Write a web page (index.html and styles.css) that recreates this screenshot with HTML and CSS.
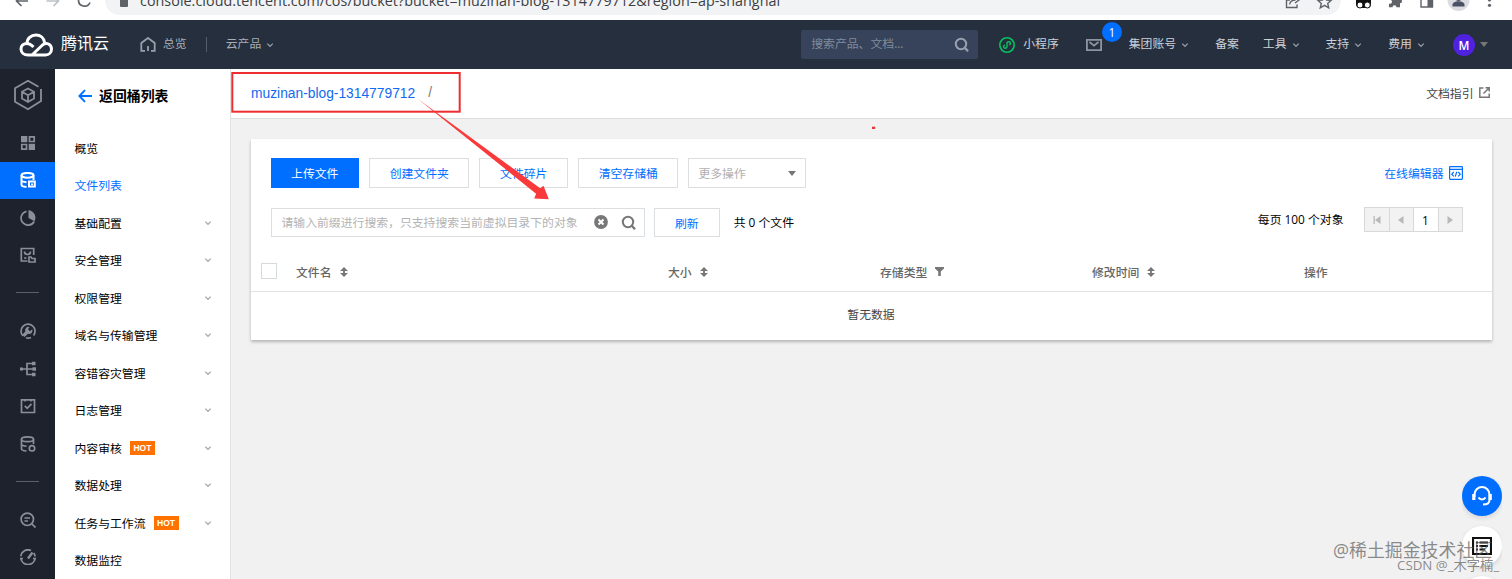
FILE: index.html
```html
<!DOCTYPE html>
<html lang="zh-CN">
<head>
  <meta charset="UTF-8" />
  <title>文件列表 - 对象存储 - 腾讯云</title>
  <link rel="stylesheet" href="styles.css">
</head>
<body>
  <!-- shared icons -->
  <svg class="defs">
    <symbol id="chevron" viewBox="0 0 8 8"><path d="M1.200 2.600 4 5.300 6.800 2.600" fill="none" stroke="currentColor" stroke-width="1.300"/></symbol>
    <symbol id="search" viewBox="0 0 16 16"><circle cx="7" cy="7" r="5.200" fill="none" stroke="currentColor" stroke-width="2"/><path d="M10.800 10.800 14 14.200" stroke="currentColor" stroke-width="2.400"/></symbol>
    <symbol id="sort" viewBox="0 0 8 10"><path d="M4 0 8 4H0zM4 10 0 6h8z" fill="currentColor"/><path d="M4 2v6" stroke="currentColor" stroke-width="1.800"/></symbol>
  </svg>

  <div class="browser">
    <svg class="nav-icons" width="96" height="20" viewBox="0 0 96 20" fill="none" stroke-width="1.700">
      <path d="M16.500 1H28M21.500-4.500 16.500 1l5 5" stroke="#5f6368"/>
      <path d="M46.500 1H58M53.500-4.500 58.500 1l-5 5" stroke="#bdc1c6"/>
      <path d="M78.500 0a6 6 0 0 0 11.500 2.500" stroke="#5f6368"/>
    </svg>
    <div class="url-bar">
      <span class="lock"></span>
      <span class="url">console.cloud.tencent.com/cos/bucket?bucket=muzinan-blog-1314779712&amp;region=ap-shanghai</span>
    </div>
    <svg class="ext-icons" width="232" height="20" viewBox="1280 0 232 20" fill="none" stroke="#5f6368" stroke-width="1.400">
      <path d="M1290 0h-3.500v7.500H1297V4.500M1289.500 4.500c.5-3 2.500-4.500 6-4.500M1295-3l4 3-4 3"/>
      <path d="m1324.500-4 2 4 4.500.4-3.300 3 1 4.400-4.200-2.500-4.200 2.500 1-4.400-3.300-3 4.500-.4z"/>
      <rect x="1356" y="-5" width="15" height="13" rx="4" fill="#111" stroke="none"/>
      <circle cx="1360" cy="5" r="3" fill="#fff" stroke="#111" stroke-width="1"/>
      <circle cx="1367.300" cy="5" r="3" fill="#fff" stroke="#111" stroke-width="1"/>
      <path d="M1389-4h11v3.200a2 2 0 1 1 0 4v4h-3.500a2 2 0 1 0-4 0H1389v-3.700a2 2 0 1 0 0-3.500z" fill="#5f6368" stroke="none"/>
      <path d="M1421-4h11.500V7H1421z"/><path d="M1427.500-4h5V7h-5z" fill="#5f6368" stroke="none"/>
      <circle cx="1458.500" cy="0" r="11" fill="#dadce0" stroke="none"/>
      <circle cx="1458.500" cy="-2" r="3" fill="#4b5164" stroke="none"/>
      <path d="M1452.500 6.500V5c0-5 12-5 12 0v1.500z" fill="#4b5164" stroke="none"/>
      <circle cx="1489.500" cy="0" r="1.600" fill="#5f6368" stroke="none"/><circle cx="1489.500" cy="5.300" r="1.600" fill="#5f6368" stroke="none"/>
    </svg>
  </div>

  <header class="topbar">
    <svg class="logo" width="34" height="24" viewBox="0 0 34 24" fill="none" stroke="#fff" stroke-width="3">
      <path d="M13 22 23.500 12c4-3.500 9-.5 9 4 0 3.500-2.500 6-6 6H9c-4 0-7-2.500-7-6s2.500-5.500 6-5.500c2.500 0 4 1 6.500 3.500M8 10.500C8 5.500 12 2 17 2c4.500 0 8 3 8.500 7.500" stroke-linejoin="round"/>
    </svg>
    <span class="brand">腾讯云</span>
    <svg class="home" width="16" height="15" viewBox="0 0 16 15" fill="none" stroke="#98a0ab" stroke-width="1.800"><path d="M5 13.800H1.300V6L8 1l6.700 5v7.800H11M8 9v5"/></svg>
    <span>总览</span>
    <i class="split"></i>
    <span>云产品</span><svg class="chev"><use href="#chevron"/></svg>

    <div class="top-search"><span>搜索产品、文档...</span><svg width="16" height="16"><use href="#search"/></svg></div>
    <svg class="mini" width="16" height="16" viewBox="0 0 16 16" fill="none" stroke="#07c160"><circle cx="8" cy="8" r="7.200" stroke-width="1.600"/><path d="M6 8.300c-2 .3-2 2.900 0 2.900 1.200 0 2-.7 2-1.700V6.500c0-1 .8-1.700 2-1.700 2 0 2 2.600 0 2.900" stroke-width="1.400"/></svg>
    <span class="light">小程序</span>
    <div class="mail">
      <svg width="16" height="12" viewBox="0 0 16 12" fill="none" stroke="#8d95a1" stroke-width="1.800"><path d="M.9.900h14.200v10.200H.9z"/><path d="m3.500 3 4.500 3.700L12.500 3"/></svg>
      <b class="count">1</b>
    </div>
    <span class="light account">集团账号</span><svg class="chev"><use href="#chevron"/></svg>
    <span class="light beian">备案</span>
    <span class="light tools">工具</span><svg class="chev"><use href="#chevron"/></svg>
    <span class="light menu">支持</span><svg class="chev"><use href="#chevron"/></svg>
    <span class="light menu">费用</span><svg class="chev"><use href="#chevron"/></svg>
    <b class="avatar">M</b>
    <i class="caret"></i>
  </header>

  <div class="layout">
    <nav class="rail">
      <div class="rail-logo">
        <svg width="30" height="32" viewBox="0 0 30 32" fill="none" stroke="#8a8f99" stroke-width="1.800"><path d="M28 10v12L15 30.300 2 22.800V9.200L15 1.700l10.500 6"/><path d="m15 9.500 6 3.300v6.700l-6 3.500-6-3.500v-6.700zM9 12.800l6 3.400 6-3.400M15 16.200V23"/></svg>
      </div>
      <a><svg viewBox="0 0 16 16"><path class="fill" d="M1 1h6.300v6.300H1zM8.700 8.700H15V15H8.700z"/><path d="M9.500 1.800h4.700v4.700H9.500zM1.800 9.500h4.700v4.700H1.800z"/></svg></a>
      <a class="active"><svg viewBox="0 0 16 16"><ellipse cx="7.500" cy="3.300" rx="6" ry="2.400"/><path d="M1.500 3.300v9.500c0 1.200 2 2 5 2.200M13.500 3.300V8M1.500 8c0 1.200 2 2 5 2.200"/><path d="M9 9.500h5.800v5H9zM12 11.500v1.500"/></svg></a>
      <a><svg viewBox="0 0 16 16"><path d="M6.500 1.300a7 7 0 1 0 7.700 10.200"/><path class="fill" d="M8.500.3a7.400 7.400 0 0 1 6 11L8.500 8z"/></svg></a>
      <a><svg viewBox="0 0 16 16"><path d="M7.500 14H1.300V1.500h12.400V8M4.500 4.500c0 4 6 4 6 0M4 11h2.500"/><path d="M9 10h2l1 1.500h3V15H9z"/></svg></a>
      <hr>
      <a><svg viewBox="0 0 16 16"><path d="M3 13A7 7 0 1 1 13.500 12.500M6 14.700c1.500.5 3.500.4 5-.3"/><path class="fill" d="M9.500 4a3.400 3.400 0 0 0-4.200 4.500l-3 3.300 2.200 2.200L8 10.800a3.400 3.400 0 0 0 4.200-4.500L10 8.300 8 6.200z"/></svg></a>
      <a><svg viewBox="0 0 16 16"><path d="M3 8h11M12 2.500H7v11h5"/><path class="fill" d="M0 6.500h3v3H0zM12 .8h3.500v3.500H12zM12.500 6.300H16v3.500h-3.500zM12 11.800h3.500v3.500H12z"/></svg></a>
      <a><svg viewBox="0 0 16 16"><path d="M1.500 1.800h13v12.700h-13zM4.800 7.800l2.400 2.500 4.300-4.500M5 1.800v1.700M11 1.800v1.700"/></svg></a>
      <a><svg viewBox="0 0 16 16"><ellipse cx="7.500" cy="3.300" rx="6" ry="2.400"/><path d="M1.500 3.300v9.500c0 1.200 2 2 5 2.200M13.500 3.300V8M1.500 8c0 1.200 2 2 5 2.200"/><circle cx="12" cy="12.300" r="2.700"/></svg></a>
      <hr>
      <a><svg viewBox="0 0 16 16"><circle cx="7.300" cy="7.300" r="6.200"/><path d="m11.500 11.500 4 4M4.500 6H10M4.500 9H8"/></svg></a>
      <a><svg viewBox="0 0 16 16"><path d="M.9 7.300A7.100 7.100 0 0 1 11 1.500M13.800 4A7 7 0 0 1 15 7.500M.9 9.500a7.200 7.200 0 0 0 14.200 0M0 9.500h3M13 9.500h3"/><path d="M12.500 3.500 8 9.500" stroke-width="2.400"/></svg></a>
    </nav>

    <aside class="sidebar">
      <h2><svg width="15" height="14" viewBox="0 0 15 14" fill="none" stroke="#006eff" stroke-width="1.900"><path d="M1.500 7H14M7 1.200 1.400 7 7 12.800"/></svg>返回桶列表</h2>
      <ul>
        <li>概览</li>
        <li class="current">文件列表</li>
        <li>基础配置<svg class="chev"><use href="#chevron"/></svg></li>
        <li>安全管理<svg class="chev"><use href="#chevron"/></svg></li>
        <li>权限管理<svg class="chev"><use href="#chevron"/></svg></li>
        <li>域名与传输管理<svg class="chev"><use href="#chevron"/></svg></li>
        <li>容错容灾管理<svg class="chev"><use href="#chevron"/></svg></li>
        <li>日志管理<svg class="chev"><use href="#chevron"/></svg></li>
        <li>内容审核<em>HOT</em><svg class="chev"><use href="#chevron"/></svg></li>
        <li>数据处理<svg class="chev"><use href="#chevron"/></svg></li>
        <li>任务与工作流<em>HOT</em><svg class="chev"><use href="#chevron"/></svg></li>
        <li>数据监控</li>
      </ul>
    </aside>

    <main>
      <div class="crumb">
        <a>muzinan-blog-1314779712</a><span class="slash">/</span>
        <span class="guide">文档指引<svg width="11" height="11" viewBox="0 0 11 11" fill="none" stroke="#777" stroke-width="1.500"><path d="M4.500 1H.8v9.200h9.400V6.500M6.500.8h3.700v3.700M10 1 4.500 6.500"/></svg></span>
      </div>

      <section class="card">
        <div class="row actions">
          <button class="primary">上传文件</button>
          <button>创建文件夹</button>
          <button>文件碎片</button>
          <button>清空存储桶</button>
          <div class="select">更多操作<i class="caret"></i></div>
          <a class="editor">在线编辑器<svg width="14" height="14" viewBox="0 0 14 14" fill="none" stroke="#006eff" stroke-width="1.200"><rect x=".6" y=".6" width="12.800" height="12.800" rx=".8"/><path d="M.6 3.300h12.800M4.800 6 2.800 8.200l2 2.200M9.200 6l2 2.200-2 2.200M7.800 5.800l-1.600 4.800"/></svg></a>
        </div>

        <div class="row filter">
          <div class="search">
            <span>请输入前缀进行搜索，只支持搜索当前虚拟目录下的对象</span>
            <svg class="clear" width="14" height="14" viewBox="0 0 14 14"><circle cx="7" cy="7" r="6.900" fill="#777"/><path d="m4.500 4.500 5 5m0-5-5 5" stroke="#fff" stroke-width="2"/></svg>
            <svg width="16" height="16"><use href="#search"/></svg>
          </div>
          <button>刷新</button>
          <span class="total">共 0 个文件</span>
          <span class="per-page">每页 100 个对象</span>
          <div class="pager">
            <span><svg width="8" height="8" viewBox="0 0 8 8"><path d="M.5 0h1.300v8H.5zM7.500 0v8L2 4z"/></svg></span>
            <span><svg width="6" height="8" viewBox="0 0 6 8"><path d="M5.500 0v8L0 4z"/></svg></span>
            <span class="page">1</span>
            <span><svg width="6" height="8" viewBox="0 0 6 8"><path d="M.5 0v8L6 4z"/></svg></span>
          </div>
        </div>

        <div class="thead">
          <i class="checkbox"></i>
          <span>文件名<svg width="8" height="10"><use href="#sort"/></svg></span>
          <span>大小<svg width="8" height="10"><use href="#sort"/></svg></span>
          <span>存储类型<svg width="9" height="9" viewBox="0 0 9 9"><path d="M0 0h9v1.500L5.800 4.500V9H3.200V4.500L0 1.500z" fill="#777"/></svg></span>
          <span>修改时间<svg width="8" height="10"><use href="#sort"/></svg></span>
          <span>操作</span>
        </div>
        <div class="empty">暂无数据</div>
      </section>
    </main>
  </div>

  <div class="floats">
    <div class="float service">
      <svg width="22" height="22" viewBox="0 0 22 22" fill="none" stroke="#fff" stroke-width="2"><path d="M3.500 12V9.500a7.500 7.500 0 0 1 15 0V15c0 3-2 4.500-6.500 4.500M7.500 12.500c1.500 2.500 5.500 2.500 7 0"/><path d="M2.800 9v6M19.200 9v6" stroke-width="3.200"/></svg>
    </div>
    <div class="float">
      <svg width="20" height="18" viewBox="0 0 20 18" fill="none" stroke="#111" stroke-width="2.200"><path d="M1 1h18v16H1z"/><path d="M4 5.500h2M7.500 5.500H16M4 9h2M7.500 9H16M4 12.500h2M7.500 12.500H13" stroke-width="1.800"/></svg>
    </div>
    <div class="float"></div>
  </div>
  <div class="mark mark-main">@稀土掘金技术社区</div>
  <div class="mark mark-sub">CSDN @_木字楠_</div>

  <!-- red box and arrow drawn over the page -->
  <svg class="annotation" width="1512" height="579" viewBox="0 0 1512 579">
    <rect x="232.300" y="73" width="227.400" height="38.700" fill="none" stroke="#ee2d30" stroke-width="2"/>
    <path d="M418 99 540.200 188.300l3.300-2.600 5.300 13.600-14.600-.8 1.900-4.800z" fill="#fa3a3a"/>
    <rect x="872" y="126.700" width="3.200" height="2.300" fill="#e53a3a"/>
  </svg>
</body>
</html>
```
FILE: styles.css
```css
* { box-sizing: border-box; }
body {
  margin: 0;
  width: 1512px;
  height: 579px;
  overflow: hidden;
  position: relative;
  background: #f1f1f1;
  color: #000;
  font-family: "Open Sans", "Noto Sans CJK SC", sans-serif;
  font-size: 11.85px;
  line-height: 18px;
}
svg { display: block; flex: none; }
span, a, button { white-space: nowrap; }
.defs { display: none; }
.chev { width: 8px; height: 8px; color: #9299a4; }
.caret {
  border: 4px solid transparent;
  border-top: 5px solid #777;
  border-bottom: 0;
}

/* browser strip */
.browser {
  display: flex;
  height: 20px;
  background: #fff;
  overflow: hidden;
}
.url-bar {
  display: flex;
  width: 1236px;
  height: 29px;
  margin: -14px 0 0 9px;
  padding-left: 15px;
  border-radius: 15px;
  background: #f1f3f4;
}
.lock {
  width: 8px;
  height: 10px;
  margin-top: 11px;
  border-radius: 1px;
  background: #5f6368;
}
.url {
  margin: 6px 0 0 12px;
  font-size: 14.300px;
  letter-spacing: 0.05px;
  color: #3c4043;
}
.ext-icons { margin-left: -61px; }

/* header */
.topbar {
  display: flex;
  align-items: center;
  height: 49px;
  padding-left: 19px;
  background: #262f3e;
  color: #a8aeb8;
}
.topbar span { padding-bottom: 3px; }
.brand { margin-left: 8px; font-size: 16px; color: #fff; }
.home { margin: 0 7px 0 31px; }
.split { width: 1px; height: 15px; margin: 0 19px; background: #555d6a; }
.topbar .chev { margin-left: 5px; }
.top-search {
  display: flex;
  align-items: center;
  justify-content: space-between;
  width: 177px;
  height: 29px;
  margin-left: 527px;
  padding: 0 8px 0 10px;
  border-radius: 2px;
  background: #36435a;
  color: #808b9b;
}
.top-search svg { color: #98a1ae; }
.mini { margin: 0 8px 0 21px; }
.light { color: #cdd1d7; }
.mail { position: relative; margin-left: 27px; }
.count {
  position: absolute;
  left: 16px;
  top: -17px;
  width: 20px;
  height: 20px;
  border-radius: 50%;
  background: #006eff;
  color: #fff;
  font-weight: normal;
  line-height: 20px;
  text-align: center;
}
.account { margin-left: 27px; }
.beian { margin-left: 26px; }
.tools { margin-left: 24px; }
.menu { margin-left: 26px; }
.avatar {
  width: 22px;
  height: 22px;
  margin: 0 5px 0 28px;
  border-radius: 50%;
  background: #4f22e0;
  color: #fff;
  font-weight: 600;
  line-height: 22px;
  text-align: center;
}

.layout { display: flex; height: 510px; }

/* icon rail */
.rail { width: 55px; background: #1e222d; overflow: hidden; }
.rail-logo { display: flex; justify-content: center; height: 55px; padding-top: 10px; }
.rail a {
  display: flex;
  align-items: center;
  justify-content: center;
  height: 37.6px;
}
.rail a svg {
  width: 16px;
  height: 16px;
  fill: none;
  stroke: #8a8f99;
  stroke-width: 1.7;
}
.rail .fill { fill: #8a8f99; stroke: none; }
.rail .active { height: 37.500px; background: #006eff; }
.rail .active svg { stroke: #fff; stroke-width: 2; }
.rail hr {
  width: 23px;
  height: 1px;
  margin: 18px auto 19.200px;
  border: 0;
  background: #5a5f69;
}

/* bucket menu */
.sidebar { width: 176px; border-right: 1px solid #e3e3e3; background: #fff; overflow: hidden; }
.sidebar h2 {
  display: flex;
  align-items: center;
  gap: 6px;
  height: 54px;
  margin: 0 0 6px;
  padding-left: 23px;
  font-size: 13.900px;
}
.sidebar ul { margin: 0; padding: 0 18px 0 19.500px; list-style: none; }
.sidebar li { display: flex; align-items: center; height: 37.5px; }
.sidebar li .chev { margin-left: auto; color: #aaa; }
.sidebar .current { color: #006eff; }
.sidebar em {
  width: 25px;
  height: 14px;
  margin-left: 8px;
  background: #ff7200;
  color: #fff;
  font: bold 8.500px/14px "Liberation Sans", sans-serif;
  text-align: center;
}

/* content */
main { flex: 1; }
.crumb {
  display: flex;
  align-items: center;
  height: 50px;
  padding: 0 22.500px 2px 20px;
  border-bottom: 1px solid #ddd;
  background: #fff;
}
.crumb a { padding-top: 1px; font: 13.800px "Liberation Sans", sans-serif; color: #1169f0; }
.slash { margin-left: 13px; font: 13.800px "Liberation Sans", sans-serif; color: #777; }
.guide { display: flex; align-items: center; gap: 5px; margin-left: auto; color: #444; }
.card {
  width: 1241px;
  height: 201.500px;
  margin: 19.500px 0 0 19.500px;
  background: #fff;
  box-shadow: 0 2px 3px rgba(0, 0, 0, 0.25);
}
.row { display: flex; align-items: center; padding: 0 29px 0 20px; }
.actions { gap: 10px; padding-top: 19.500px; }
button {
  height: 30px;
  padding: 0 19.600px;
  border: 1px solid #dcdfe1;
  background: #fff;
  color: #006eff;
  font: inherit;
}
.primary { border-color: #006eff; background: #006eff; color: #fff; }
.select {
  display: flex;
  align-items: center;
  justify-content: space-between;
  width: 118px;
  height: 30px;
  padding: 0 9px;
  border: 1px solid #dcdfe1;
  color: #b0b0b0;
}
.editor { display: flex; align-items: center; gap: 5px; margin-left: auto; color: #006eff; }
.filter { margin-top: 20px; }
.search {
  display: flex;
  align-items: center;
  width: 374px;
  height: 29px;
  padding-left: 10px;
  border: 1px solid #dcdfe1;
  color: #b3b3b3;
}
.search span { padding-bottom: 1px; }
.search svg { color: #777; }
.search .clear { margin: 0 13px 2px 16.500px; }
.filter button { height: 29px; margin-left: 9.500px; padding: 0 20px; }
.total { margin-left: 14px; padding-bottom: 2px; }
.per-page { margin: -7px 20px 0 auto; }
.pager { display: flex; margin-top: -6px; border: 1px solid #d8d8d8; }
.pager span {
  display: flex;
  align-items: center;
  justify-content: center;
  width: 24px;
  height: 23px;
  background: #f2f2f2;
  border-left: 1px solid #d8d8d8;
}
.pager span:first-child { border-left: 0; }
.pager .page { width: 25px; background: #fff; }
.pager svg { fill: #b8b8b8; }
.thead {
  display: grid;
  grid-template-columns: 35.500px 372px 212px 212px 212px 1fr;
  align-items: center;
  height: 40px;
  margin-top: 14.500px;
  padding-left: 10px;
  border-bottom: 1px solid #e3e3e3;
  color: #666;
  font-weight: 500;
}
.thead span { display: flex; align-items: center; gap: 8px; padding-top: 1px; }
.thead svg { color: #777; }
.checkbox { width: 16px; height: 16px; border: 1px solid #d5dadd; }
.empty { line-height: 45px; text-align: center; color: #444; }

/* floating buttons */
.floats { position: absolute; left: 1462px; top: 476px; height: 103px; overflow: hidden; }
.float {
  display: flex;
  align-items: center;
  justify-content: center;
  width: 40px;
  height: 40px;
  margin-bottom: 10px;
  border-radius: 50%;
  background: #fff;
  box-shadow: 0 2px 5px rgba(0, 0, 0, 0.12);
}
.service { background: #006eff; }
.mark { position: absolute; white-space: nowrap; color: rgba(90, 90, 90, 0.7); }
.mark-main { left: 1333px; top: 539px; font-size: 17.900px; line-height: 22px; }
.mark-sub { left: 1397px; top: 556px; font-size: 13.300px; }
.annotation { position: absolute; left: 0; top: 0; pointer-events: none; }
```
